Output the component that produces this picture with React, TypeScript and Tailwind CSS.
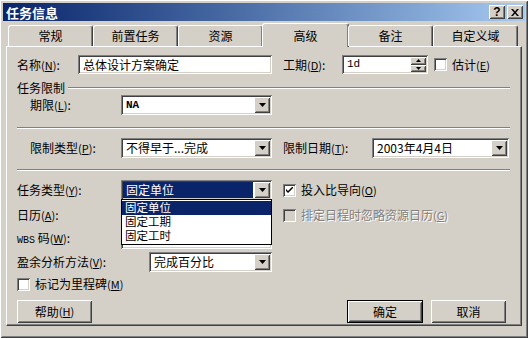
import React from 'react';

const sunken =
  'shadow-[inset_1px_1px_0_#808080,inset_-1px_-1px_0_#ffffff,inset_2px_2px_0_#404040,inset_-2px_-2px_0_#d4d0c8]';
const raised =
  'shadow-[inset_1px_1px_0_#ffffff,inset_-1px_-1px_0_#404040,inset_2px_2px_0_#d4d0c8,inset_-2px_-2px_0_#808080]';

const Key = ({ k }: { k: string }) => (
  <span className="text-[11px]">
    (<span className="underline">{k}</span>)
  </span>
);

const Arrow = () => (
  <div className={`w-[16px] h-[16px] bg-[#d4d0c8] ${raised} flex items-center justify-center shrink-0`}>
    <svg width="7" height="4" viewBox="0 0 7 4">
      <path d="M0 0h7L3.5 4z" fill="#000" />
    </svg>
  </div>
);

const Combo = ({ w, children, mono }: { w: string; children?: React.ReactNode; mono?: boolean }) => (
  <div className={`${w} h-[20px] bg-white ${sunken} flex items-center p-[2px] shrink-0`}>
    <div className={`flex-1 pl-[3px] ${mono ? "font-['Liberation_Mono'] text-[11px] font-bold" : ''}`}>{children}</div>
    <Arrow />
  </div>
);

const Check = ({ checked, disabled }: { checked?: boolean; disabled?: boolean }) => (
  <div
    className={`w-[13px] h-[13px] ${disabled ? 'bg-[#d4d0c8]' : 'bg-white'} ${sunken} flex items-center justify-center shrink-0`}
  >
    {checked && (
      <svg width="7" height="7" viewBox="0 0 7 7">
        <path d="M0 2l2 2 5-5v2L2 6 0 4z" fill="#000" />
      </svg>
    )}
  </div>
);

const Button = ({ children, def, w }: { children: React.ReactNode; def?: boolean; w: string }) => (
  <div className={`${w} h-[23px] ${def ? 'border border-black' : ''} shrink-0`}>
    <div className={`w-full h-full bg-[#d4d0c8] ${raised} flex items-center justify-center`}>{children}</div>
  </div>
);

const Sep = () => <div className="h-[2px] border-t border-[#808080] border-b border-b-white" />;

const tabs = ['常规', '前置任务', '资源', '高级', '备注', '自定义域'];

export default function App() {
  return (
    <div className="w-[528px] h-[338px] bg-[#d4d0c8] font-['Noto_Sans_CJK_SC',sans-serif] text-[12px] leading-none text-black overflow-hidden">
      <div className={`w-[528px] h-[338px] p-[3px] ${raised} flex flex-col`}>
        {/* title bar */}
        <div className="h-[18px] bg-linear-to-r from-[#0a246a] to-[#a6caf0] flex items-center justify-between pl-[3px] pr-[2px]">
          <span className="text-white font-bold text-[13px]">任务信息</span>
          <div className="flex gap-[2px]">
            <div className={`w-[16px] h-[14px] bg-[#d4d0c8] ${raised} flex items-center justify-center font-bold font-['Liberation_Sans'] text-[12px]`}>
              ?
            </div>
            <div className={`w-[16px] h-[14px] bg-[#d4d0c8] ${raised} flex items-center justify-center`}>
              <svg width="8" height="7" viewBox="0 0 8 7">
                <path d="M0 0h2l2 2.5L6 0h2L5 3.5 8 7H6L4 4.5 2 7H0l3-3.5z" fill="#000" />
              </svg>
            </div>
          </div>
        </div>

        {/* tabs */}
        <div className="flex items-end h-[25px] pl-[5px] relative z-10">
          {tabs.map((t) =>
            t === '高级' ? (
              <div
                key={t}
                className="w-[87px] h-[24px] -mx-[1px] -mb-[1px] bg-[#d4d0c8] border-l border-t border-white border-r border-r-[#404040] rounded-t-[3px] shadow-[inset_-1px_0_0_#808080] flex items-center justify-center text-[12px]"
              >
                {t}
              </div>
            ) : (
              <div
                key={t}
                className="w-[85px] h-[21px] bg-[#d4d0c8] border-l border-t border-white border-r border-r-[#404040] rounded-t-[3px] shadow-[inset_-1px_0_0_#808080] flex items-center justify-center text-[12px]"
              >
                {t}
              </div>
            )
          )}
        </div>

        {/* panel */}
        <div className="ml-[3px] w-[516px] h-[280px] bg-[#d4d0c8] border-l border-t border-white border-r border-b border-r-[#404040] border-b-[#404040] shadow-[inset_-1px_-1px_0_#808080] pl-[10px] pr-[11px] flex flex-col">
          <div className="mt-[8px] h-[19px] flex items-center">
            <div className="w-[61px]">
              名称<Key k="N" />:
            </div>
            <div className={`w-[194px] h-[19px] bg-white ${sunken} flex items-center pl-[5px]`}>总体设计方案确定</div>
            <div className="w-[59px] ml-[11px]">
              工期<Key k="D" />:
            </div>
            <div className={`w-[86px] h-[19px] bg-white ${sunken} flex items-center p-[2px]`}>
              <div className="flex-1 pl-[3px] font-['Liberation_Mono'] text-[11px]">1d</div>
              <div className="w-[16px] h-[15px] flex flex-col">
                {[0, 1].map((i) => (
                  <div key={i} className={`flex-1 bg-[#d4d0c8] ${raised} flex items-center justify-center`}>
                    <svg width="5" height="3" viewBox="0 0 5 3">
                      <path d={i === 0 ? 'M0 3h5L2.5 0z' : 'M0 0h5L2.5 3z'} fill="#000" />
                    </svg>
                  </div>
                ))}
              </div>
            </div>
            <div className="ml-[6px]">
              <Check />
            </div>
            <div className="ml-[5px]">
              估计<Key k="E" />
            </div>
          </div>

          <div className="mt-[7px] h-[14px] flex items-center">
            <span>任务限制</span>
            <div className="flex-1 ml-[3px]">
              <Sep />
            </div>
          </div>

          <div className="h-[20px] flex items-center pl-[13px]">
            <div className="w-[91px]">
              期限<Key k="L" />:
            </div>
            <Combo w="w-[151px]" mono>
              NA
            </Combo>
          </div>

          <div className="mt-[12px]">
            <Sep />
          </div>

          <div className="mt-[9px] h-[20px] flex items-center pl-[13px]">
            <div className="w-[91px]">
              限制类型<Key k="P" />:
            </div>
            <Combo w="w-[151px]">不得早于...完成</Combo>
            <div className="w-[89px] ml-[11px]">
              限制日期<Key k="T" />:
            </div>
            <Combo w="w-[137px]">2003年4月4日</Combo>
          </div>

          <div className="mt-[11px]">
            <Sep />
          </div>

          <div className="mt-[9px] h-[20px] flex items-center relative z-20">
            <div className="w-[104px]">
              任务类型<Key k="Y" />:
            </div>
            <div className="relative">
              <div className={`w-[151px] h-[20px] bg-white ${sunken} flex items-center p-[2px]`}>
                <div className="flex-1 h-full mr-[1px] bg-[#0a246a] text-white flex items-center pl-[3px]">固定单位</div>
                <Arrow />
              </div>
              <div className="absolute left-0 top-[19px] w-[151px] bg-white border border-black flex flex-col py-[1px] text-[11.5px]">
                <div className="h-[14px] bg-[#0a246a] text-white flex items-center pl-[3px]">固定单位</div>
                <div className="h-[14px] flex items-center pl-[3px]">固定工期</div>
                <div className="h-[14px] flex items-center pl-[3px]">固定工时</div>
              </div>
            </div>
            <div className="ml-[11px]">
              <Check checked />
            </div>
            <div className="ml-[5px]">
              投入比导向<Key k="O" />
            </div>
          </div>

          <div className="mt-[5px] h-[20px] flex items-center">
            <div className="w-[104px]">
              日历<Key k="A" />:
            </div>
            <div className={`w-[151px] h-[20px] bg-white ${sunken}`} />
            <div className="ml-[11px]">
              <Check disabled />
            </div>
            <div className="ml-[5px] text-[#808080] [text-shadow:1px_1px_0_#ffffff]">
              排定日程时忽略资源日历<Key k="G" />
            </div>
          </div>

          <div className="mt-[4px] h-[20px] flex items-center">
            <div className="w-[104px]">
              <span className="font-['Liberation_Mono'] text-[10px]">WBS</span> 码<Key k="W" />:
            </div>
            <div className={`w-[151px] h-[20px] bg-white ${sunken}`} />
          </div>

          <div className="mt-[3px] h-[20px] flex items-center">
            <div className="w-[132px]">
              盈余分析方法<Key k="V" />:
            </div>
            <Combo w="w-[123px]">完成百分比</Combo>
          </div>

          <div className="mt-[5px] h-[14px] flex items-center">
            <Check />
            <div className="ml-[5px]">
              标记为里程碑<Key k="M" />
            </div>
          </div>

          <div className="mt-[9px] flex items-center">
            <Button w="w-[75px]">
              帮助<Key k="H" />
            </Button>
            <div className="flex-1" />
            <Button w="w-[76px]" def>
              确定
            </Button>
            <div className="ml-[8px] mr-[4px]">
              <Button w="w-[75px]">取消</Button>
            </div>
          </div>
        </div>
      </div>
    </div>
  );
}
